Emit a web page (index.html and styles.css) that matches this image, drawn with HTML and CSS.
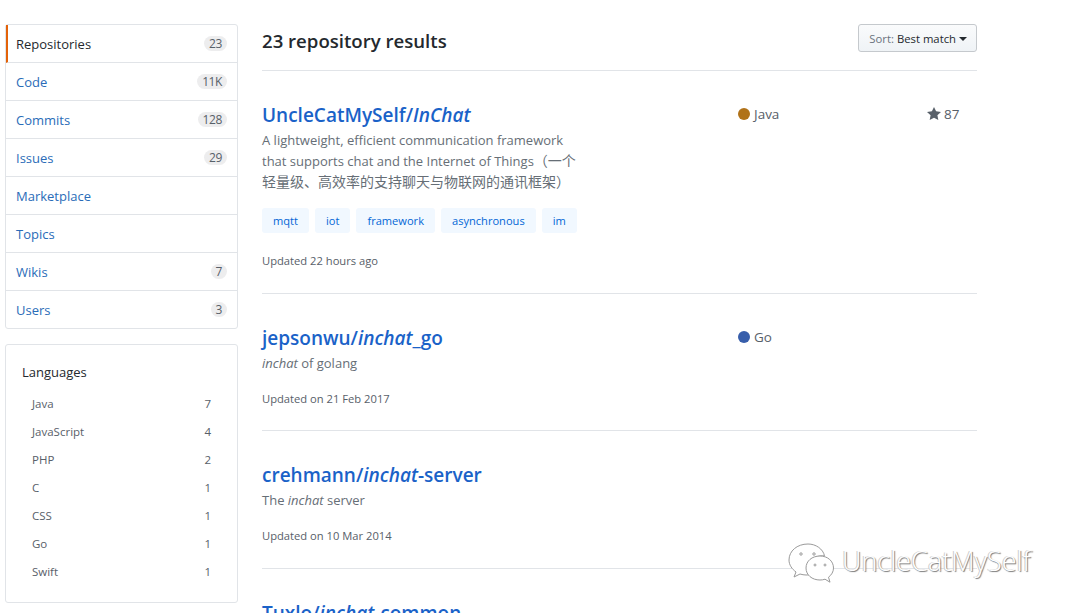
FILE: index.html
```html
<!DOCTYPE html>
<html>
	<head>
		<meta charset="utf-8">
		<title>Search results</title>
		<link rel="stylesheet" href="styles.css">
	</head>
	<body>
		<div class="page">
			<div class="sidebar">
				<nav class="menu">
					<a class="menu__item menu__item--selected">Repositories<span class="counter">23</span></a>
					<a class="menu__item">Code<span class="counter">11K</span></a>
					<a class="menu__item">Commits<span class="counter">128</span></a>
					<a class="menu__item">Issues<span class="counter">29</span></a>
					<a class="menu__item">Marketplace</a>
					<a class="menu__item">Topics</a>
					<a class="menu__item">Wikis<span class="counter">7</span></a>
					<a class="menu__item">Users<span class="counter">3</span></a>
				</nav>
				<div class="languages">
					<h3 class="languages__title">Languages</h3>
					<div class="languages__row"><span>Java</span><span>7</span></div>
					<div class="languages__row"><span>JavaScript</span><span>4</span></div>
					<div class="languages__row"><span>PHP</span><span>2</span></div>
					<div class="languages__row"><span>C</span><span>1</span></div>
					<div class="languages__row"><span>CSS</span><span>1</span></div>
					<div class="languages__row"><span>Go</span><span>1</span></div>
					<div class="languages__row"><span>Swift</span><span>1</span></div>
				</div>
			</div>
			<main class="results">
				<div class="results__head">
					<h3 class="results__count">23 repository results</h3>
					<button type="button" class="sort-button"><span class="sort-button__label">Sort:</span> Best match<i class="caret"></i></button>
				</div>
				<div class="repo repo--first">
					<div class="repo__info">
						<a class="repo__name">UncleCatMySelf/<em>InChat</em></a>
						<p class="repo__desc">A lightweight, efficient communication framework that supports chat and the Internet of Things<span class="repo__cjk">（一个轻量级、高效率的支持聊天与物联网的通讯框架）</span></p>
						<div class="topics">
							<a class="topic">mqtt</a>
							<a class="topic">iot</a>
							<a class="topic">framework</a>
							<a class="topic">asynchronous</a>
							<a class="topic">im</a>
						</div>
						<p class="repo__updated">Updated 22 hours ago</p>
					</div>
					<div class="repo__lang"><i class="lang-dot lang-dot--java"></i>Java</div>
					<div class="repo__stars">
						<svg class="star" width="14" height="16" viewBox="0 0 14 16"><path fill="#586069" d="M14 6l-4.900-.64L7 1 4.900 5.360 0 6l3.600 3.260L2.670 14 7 11.670 11.330 14l-.93-4.740L14 6z"/></svg>87
					</div>
				</div>
				<div class="repo repo--short">
					<div class="repo__info">
						<a class="repo__name">jepsonwu/<em>inchat</em>_go</a>
						<p class="repo__desc"><em>inchat</em> of golang</p>
						<p class="repo__updated">Updated on 21 Feb 2017</p>
					</div>
					<div class="repo__lang"><i class="lang-dot lang-dot--go"></i>Go</div>
				</div>
				<div class="repo">
					<div class="repo__info">
						<a class="repo__name">crehmann/<em>inchat</em>-server</a>
						<p class="repo__desc">The <em>inchat</em> server</p>
						<p class="repo__updated">Updated on 10 Mar 2014</p>
					</div>
				</div>
				<div class="repo">
					<div class="repo__info">
						<a class="repo__name">Tuxlo/<em>inchat</em>-common</a>
					</div>
				</div>
			</main>
		</div>
		<div class="watermark">
			<svg width="50" height="42" viewBox="0 0 50 42" fill="#fff" stroke="#9a9a9a" stroke-width="1">
				<path d="M21 2C10 2 2 9 2 18c0 5 3 9 7 12l-2 5 6-3c2 .6 4 1 6 1 1 0 2 0 3-.2-1-2-1.500-4-1.500-6 0-8 7-13 15-13h2C36 7 29 2 21 2z"/>
				<path d="M33 14c-8 0-14 5-14 12s6 12 14 12c2 0 3-.2 5-.8l5 3-1.500-5c3-2.200 5-5.500 5-9.200 0-7-6-12-13.500-12z"/>
				<circle cx="14" cy="12" r="1.200"/><circle cx="27" cy="12" r="1.200"/>
				<circle cx="28" cy="23" r="1"/><circle cx="38" cy="23" r="1"/>
			</svg>
			<span class="watermark__text">UncleCatMySelf</span>
		</div>
	</body>
</html>
```
FILE: styles.css
```css
html, body {
	margin: 0;
	height: 100%;
	overflow: hidden;
	background: #fff;
}
body {
	font-family: "Open Sans", "Noto Sans CJK SC", sans-serif;
	font-size: 13px;
	color: #24292e;
}
a {
	color: #0366d6;
	text-decoration: none;
}
.page {
	display: flex;
	padding: 24px 0 0 5px;
	width: 972px;
}
.sidebar {
	width: 233px;
	flex: none;
	margin-right: 24px;
}
.menu {
	border: 1px solid #e1e4e8;
	border-radius: 3px;
	margin-bottom: 15px;
}
.menu__item {
	display: flex;
	align-items: center;
	justify-content: space-between;
	height: 37px;
	padding: 0 10px;
	border-bottom: 1px solid #e1e4e8;
	color: #2a6cb8;
}
.menu__item:last-child {
	border-bottom: 0;
}
.menu__item--selected {
	color: #24292e;
	font-weight: 500;
	border-left: 2px solid #e36209;
	padding-left: 8px;
}
.counter {
	padding: 1px 5px;
	font-size: 12px;
	line-height: 13px;
	color: #586069;
	background: rgba(27,31,35,.08);
	border-radius: 20px;
	letter-spacing: -.4px;
}
.languages {
	border: 1px solid #e1e4e8;
	border-radius: 3px;
	padding: 16px;
	height: 225px;
}
.languages__title {
	margin: 0 0 7px;
	font-size: 13px;
	font-weight: 500;
	line-height: 22px;
}
.languages__row {
	display: flex;
	justify-content: space-between;
	height: 28px;
	line-height: 28px;
	padding: 0 10px;
	font-size: 11.500px;
	color: #586069;
}
.results {
	flex: 1;
	min-width: 0;
}
.results__head {
	display: flex;
	align-items: flex-start;
	justify-content: space-between;
	height: 46px;
	border-bottom: 1px solid #e1e4e8;
}
.results__count {
	margin: 3px 0 0;
	font-size: 18.600px;
	font-weight: 600;
	line-height: 28px;
}
.sort-button {
	height: 28px;
	padding: 0 9px 0 10px;
	font-family: inherit;
	font-size: 11.300px;
	color: #24292e;
	background: linear-gradient(#fafbfc, #eff3f6);
	border: 1px solid #c5c9cd;
	border-radius: 3px;
}
.sort-button__label {
	color: #6a737d;
}
.caret {
	display: inline-block;
	margin-left: 3px;
	vertical-align: 2px;
	border: 4px solid transparent;
	border-top-color: #24292e;
	border-bottom: 0;
}
.repo {
	display: flex;
	align-items: flex-start;
	padding-top: 30px;
	height: 107px;
	border-bottom: 1px solid #e1e4e8;
}
.repo--first {
	height: 192px;
}
.repo--short {
	height: 106px;
}
.repo__info {
	width: 476px;
	flex: none;
}
.repo__name {
	display: block;
	font-size: 19px;
	font-weight: 600;
	line-height: 28px;
	color: #1a62c8;
}
.repo__desc {
	width: 325px;
	margin: 1px 0 0;
	font-size: 13px;
	line-height: 21px;
	color: #666e76;
}
.repo__cjk {
	font-size: 14px;
	line-height: 1;
}
.repo__updated {
	margin: 16px 0 0;
	font-size: 11.200px;
	line-height: 18px;
	color: #586069;
}
.repo--first .repo__updated {
	margin-top: 19px;
}
.topics {
	display: flex;
	gap: 6px;
	margin-top: 15px;
}
.topic {
	padding: 0 11px;
	font-size: 11.100px;
	line-height: 25px;
	color: #0366d6;
	background: #f1f8ff;
	border-radius: 3px;
}
.repo__lang {
	display: flex;
	align-items: center;
	width: 189px;
	flex: none;
	height: 26px;
	font-size: 13.500px;
	color: #586069;
}
.lang-dot {
	width: 12px;
	height: 12px;
	margin-right: 4px;
	border-radius: 50%;
}
.lang-dot--java {
	background: #b07219;
}
.lang-dot--go {
	background: #375eab;
}
.repo__stars {
	display: flex;
	align-items: center;
	gap: 3px;
	height: 26px;
	font-size: 13.500px;
	color: #586069;
}
.watermark {
	position: absolute;
	left: 787px;
	top: 542px;
	display: flex;
	align-items: center;
	gap: 5px;
}
.watermark__text {
	position: relative;
	top: -2px;
	font-size: 27px;
	font-weight: 300;
	color: #fff;
	text-shadow: 1px 1px 1px #777, -1px 0 0 #ccc;
	line-height: 42px;
}
```
